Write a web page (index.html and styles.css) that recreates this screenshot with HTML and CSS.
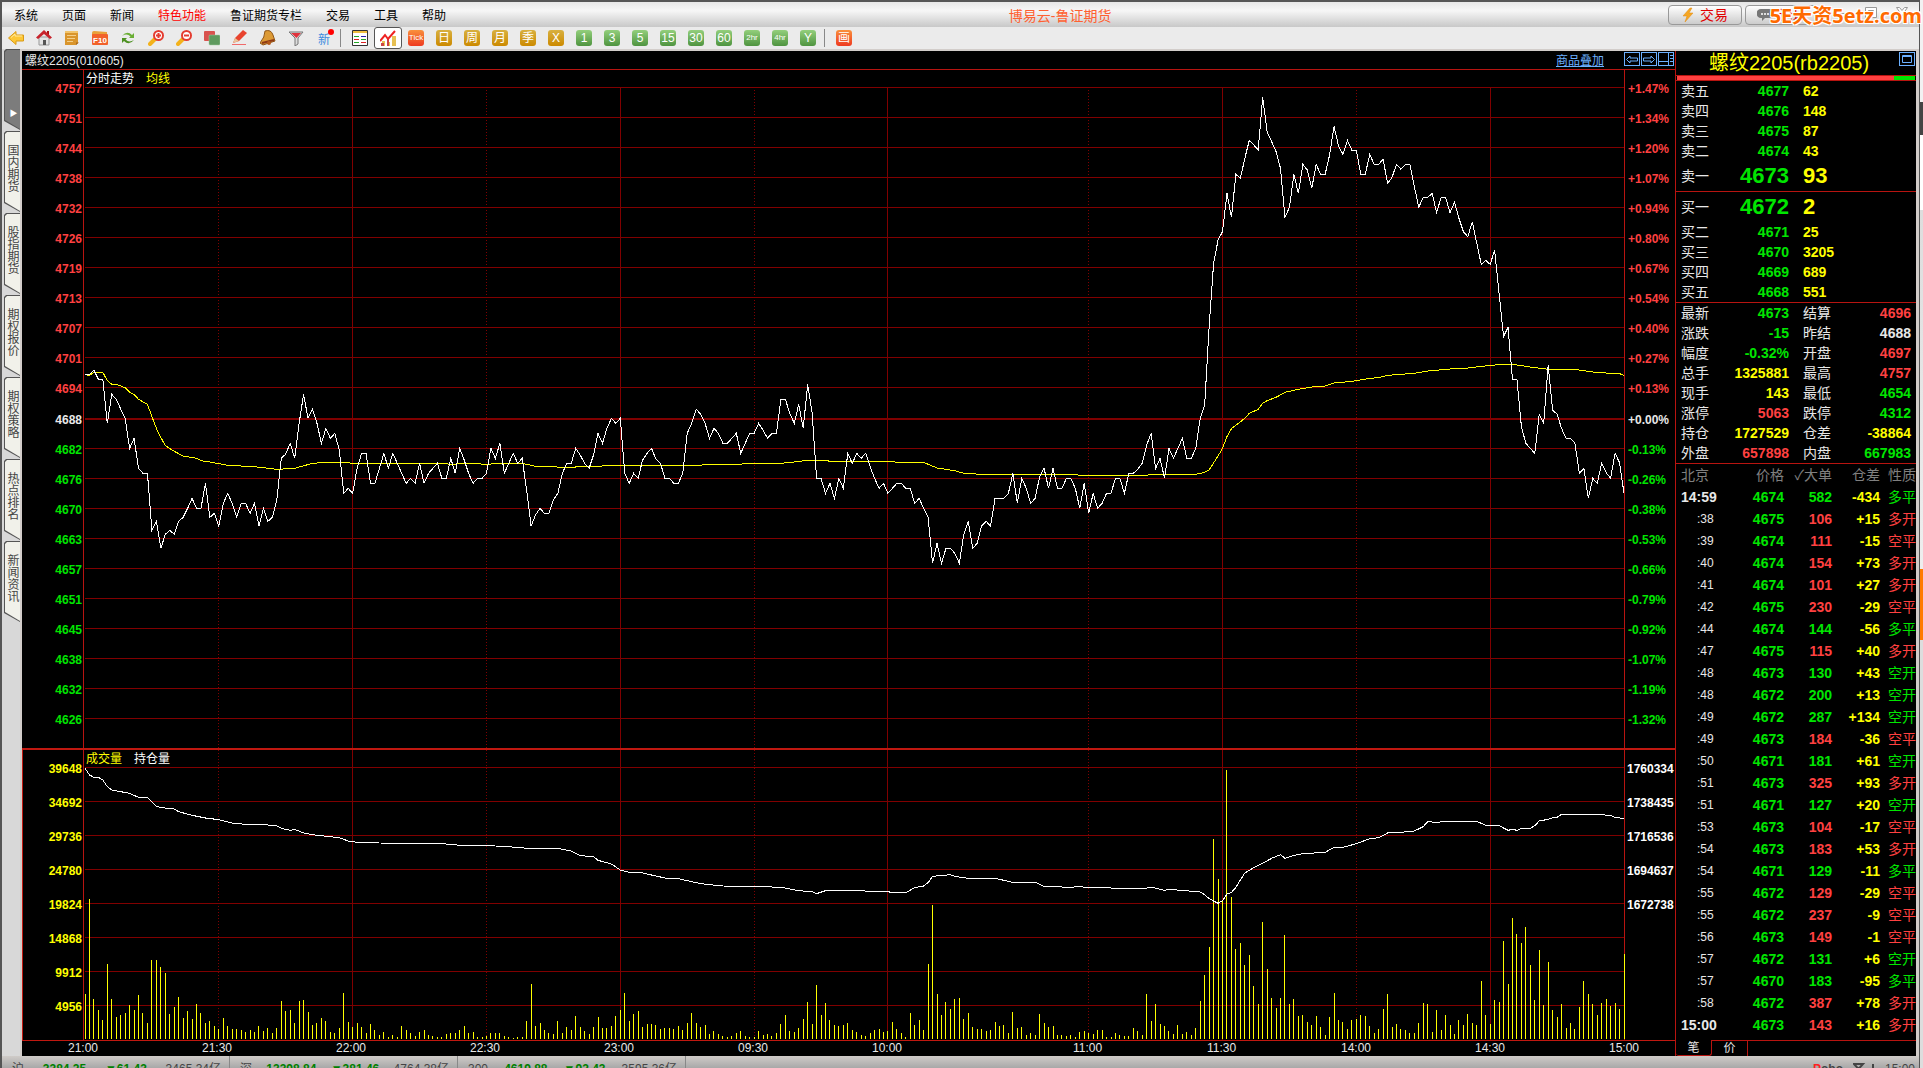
FILE: index.html
```html
<!DOCTYPE html>
<html lang="zh-CN">
<head>
    <meta charset="UTF-8">
    <meta name="viewport" content="width=device-width, initial-scale=1.0">
    <title>博易云-鲁证期货</title>
    <link rel="stylesheet" href="styles.css">
</head>
<body>
<div class="window">
    <header class="titlebar">
        <nav class="menu">
            <a href="#">系统</a>
            <a href="#">页面</a>
            <a href="#">新闻</a>
            <a href="#" class="hot">特色功能</a>
            <a href="#">鲁证期货专栏</a>
            <a href="#">交易</a>
            <a href="#">工具</a>
            <a href="#">帮助</a>
        </nav>
        <h1 class="title">博易云-鲁证期货</h1>
        <div class="actions">
            <button class="action">
                <svg width="12" height="16" viewBox="0 0 12 16"><path d="M8 1 1 9h4L3 15l8-9H7l3-5z" fill="#f5a623" stroke="#e08a10" stroke-width=".5"/></svg>
                交易
            </button>
            <button class="action">
                <svg width="16" height="14" viewBox="0 0 16 14"><path d="M4 1h8a4 4 0 0 1 0 9H8l-3 3v-3H4a4 4 0 0 1 0-9z" fill="#777"/><path d="M4 5h2v2H4zM7 5h2v2H7zM10 5h2v2h-2z" fill="#ddd"/></svg>
                论坛
            </button>
        </div>
        <div class="controls">
            <button class="control" aria-label="最小化"><svg width="14" height="14" viewBox="0 0 14 14"><path d="M2.500 7.500h9v3h-9z" fill="#fff" stroke="#999"/></svg></button>
            <button class="control" aria-label="还原"><svg width="14" height="14" viewBox="0 0 14 14"><path d="M1.500 1.500h11v10h-11z" fill="#fff" stroke="#999"/><path d="M4.500 4.500h5v4h-5z" fill="#ddd" stroke="#999"/></svg></button>
            <button class="control" aria-label="关闭"><svg width="14" height="14" viewBox="0 0 14 14"><path d="M1.500 1.500h3L7 4.500l2.500-3h3L9 6.500l3.500 5h-3L7 8.500l-2.500 3h-3L5 6.500z" fill="#fff" stroke="#999"/></svg></button>
        </div>
        <span class="watermark">5E天资5etz.com</span>
    </header>

    <div class="toolbar">
        <button class="tool" aria-label="后退"><svg viewBox="0 0 16 16"><path d="M.5 8 8 1.500V5h7.500v6H8v3.500z" fill="#fcc737" stroke="#d99a15"/><path d="M3 7.500 7 4v2h7" fill="none" stroke="#ffe9a0"/></svg></button>
        <button class="tool" aria-label="首页"><svg viewBox="0 0 16 16"><path d="M3 7h10v8H3z" fill="#e4e4e4" stroke="#999"/><path d="M7 10h3v5H7z" fill="#555"/><path d="M11 1h2v4h-2z" fill="#a11"/><path d="M8 0 0 7.500 2 9l6-5 6 5 2-1.500z" fill="#c8232c"/></svg></button>
        <button class="tool" aria-label="公告"><svg viewBox="0 0 16 16"><path d="M1 1h13v12l-2 2H1z" fill="#d9952c"/><path d="M1 1h13v2H1z" fill="#f1c46c"/><path d="M3 5.500h9M3 8.500h8M3 11.500h6" stroke="#f3cf8a"/><path d="M12 15v-2.500h3z" fill="#a8681b"/></svg></button>
        <button class="tool" aria-label="F10"><svg viewBox="0 0 16 16"><path d="M0 3q0-2 2-2l13 1v4H0z" fill="#e9a13a"/><rect y="4" width="16" height="11" rx="1" fill="#f2622a"/><text x="8" y="13" class="f10">F10</text></svg></button>
        <button class="tool" aria-label="刷新"><svg viewBox="0 0 16 16"><path d="M2 6q5-6 10-1l2-2v5H9l1.500-1.500Q7 3 2 6z" fill="#6aae35"/><path d="M14 10q-5 6-10 1l-2 2V8h5L5.500 9.500Q9 13 14 10z" fill="#4d9122"/></svg></button>
        <button class="tool" aria-label="放大"><svg viewBox="0 0 16 16"><path d="m2 14 5-5" stroke="#f3b21b" stroke-width="4" stroke-linecap="round"/><circle cx="10.500" cy="5.500" r="4.500" fill="#fff" stroke="#e43c30" stroke-width="2"/><path d="M8 5.500h5M10.500 3v5" stroke="#e43c30" stroke-width="2"/></svg></button>
        <button class="tool" aria-label="缩小"><svg viewBox="0 0 16 16"><path d="m2 14 5-5" stroke="#f3b21b" stroke-width="4" stroke-linecap="round"/><circle cx="10.500" cy="5.500" r="4.500" fill="#fff" stroke="#e43c30" stroke-width="2"/><path d="M8 5.500h5" stroke="#e43c30" stroke-width="2"/></svg></button>
        <button class="tool" aria-label="叠加"><svg viewBox="0 0 16 16"><rect width="11" height="10" y="1" rx="1" fill="#d9534f"/><rect x="5" y="5" width="11" height="10" rx="1" fill="#5f9a5f" stroke="#a3c9a3" stroke-width=".5"/></svg></button>
        <button class="tool" aria-label="画笔"><svg viewBox="0 0 16 16"><path d="m1 13 2-5 8-8 4 3-8 8z" fill="#e8432e"/><path d="m3 8 4 3-6 2z" fill="#e8c49a"/><path d="M0 14.500h14" stroke="#f06a6a"/></svg></button>
        <button class="tool" aria-label="预警"><svg viewBox="0 0 16 16"><path d="M5 1q6-2 8 4l2 6-12 4-3-2q5-6 5-12z" fill="#dc9a35" stroke="#8f5516"/><path d="m2 13 12-3" stroke="#8f3a16" stroke-width="2"/><circle cx="9" cy="13" r="2" fill="#b55a1b"/></svg></button>
        <button class="tool" aria-label="筛选"><svg viewBox="0 0 16 16"><path d="M1 2h14l-5 6v6l-3 2V8z" fill="#ddd" stroke="#777"/><path d="M3 3h10L8.500 8z" fill="#e0323c"/></svg></button>
        <button class="tool new">新</button>
        <span class="sep"></span>
        <button class="tool" aria-label="报价"><svg viewBox="0 0 16 16"><path d="M.5.5h15v15H.5z" fill="#fff" stroke="#333"/><path d="M1 1h14v2H1z" fill="#f0c040"/><path d="M2 6.500h5M2 12.500h5M9 9.500h5" stroke="#2a2"/><path d="M2 9.500h5M9 12.500h5" stroke="#d22"/><path d="M9 6.500h5" stroke="#22a"/></svg></button>
        <button class="tool active" aria-label="分时"><svg viewBox="0 0 16 16"><path d="M2 11h3v5H2zM7 12h3v4H7zM12 6h4v10h-4z" fill="#e7c052"/><path d="M1 13h3v3H1zM7 9h2v7H7z" fill="#c44"/><path d="m0 11 5-6 3 4 7-8" fill="none" stroke="#e22" stroke-width="2"/></svg></button>
        <button class="tool"><span class="period red narrow">Tick</span></button>
        <button class="tool"><span class="period gold">日</span></button>
        <button class="tool"><span class="period gold">周</span></button>
        <button class="tool"><span class="period gold">月</span></button>
        <button class="tool"><span class="period gold">季</span></button>
        <button class="tool"><span class="period gold">X</span></button>
        <button class="tool"><span class="period green">1</span></button>
        <button class="tool"><span class="period green">3</span></button>
        <button class="tool"><span class="period green">5</span></button>
        <button class="tool"><span class="period green">15</span></button>
        <button class="tool"><span class="period green">30</span></button>
        <button class="tool"><span class="period green">60</span></button>
        <button class="tool"><span class="period green narrow">2hr</span></button>
        <button class="tool"><span class="period green narrow">4hr</span></button>
        <button class="tool"><span class="period green">Y</span></button>
        <span class="sep"></span>
        <button class="tool"><span class="period red">画</span></button>
    </div>

    <main class="main">
        <aside class="side">
            <button class="tab open" aria-label="展开">▶</button>
            <button class="tab">国内期货</button>
            <button class="tab">股指期货</button>
            <button class="tab">期权报价</button>
            <button class="tab">期权策略</button>
            <button class="tab">热点排名</button>
            <button class="tab">新闻资讯</button>
        </aside>

        <section class="charts">
            <div class="chart-head">
                <span>螺纹2205(010605)</span>
                <a href="#" class="overlay">商品叠加</a>
                <div class="boxes">
                    <button class="box" aria-label="左"><svg width="12" height="9" viewBox="0 0 12 9"><path d="M.5 4.500 4 1v2h7.500v3H4v2z"/></svg></button>
                    <button class="box" aria-label="右"><svg width="12" height="9" viewBox="0 0 12 9"><path d="M11.500 4.500 8 1v2H.5v3H8v2z"/></svg></button>
                    <button class="box" aria-label="布局"><svg width="14" height="12" viewBox="0 0 14 12"><path d="M0 8.500h9M9.500 0v12M11 2.500h3M11 5.500h3M11 8.500h3"/></svg></button>
                </div>
            </div>
            <div class="chart">
                <ul class="axis left" id="price-axis"></ul>
                <div class="plot">
                    <svg id="price" viewBox="0 0 345 2034" preserveAspectRatio="none"></svg>
                    <p class="legend"><span>分时走势</span><span class="yellow">均线</span></p>
                </div>
                <ul class="axis right" id="percent-axis"></ul>
            </div>
            <div class="chart volume">
                <ul class="axis left" id="volume-axis"></ul>
                <div class="plot">
                    <svg id="volume" viewBox="0 0 345 870" preserveAspectRatio="none"></svg>
                    <p class="legend"><span class="yellow">成交量</span><span>持仓量</span></p>
                </div>
                <ul class="axis right" id="interest-axis"></ul>
            </div>
            <div class="times">
                <span>21:00</span><span>21:30</span><span>22:00</span><span>22:30</span><span>23:00</span><span>09:30</span><span>10:00</span><span>11:00</span><span>11:30</span><span>14:00</span><span>14:30</span><span>15:00</span>
            </div>
        </section>

        <section class="quote">
            <div class="quote-head">
                <h2>螺纹2205(rb2205)</h2>
                <button class="box" aria-label="最大化"><svg width="10" height="8" viewBox="0 0 10 8"><path d="M.5.5h9v7h-9zM0 1.500h10"/></svg></button>
            </div>
            <div class="ratio"><i></i></div>
            <table class="book">
                <tr><th>卖五</th><td>4677</td><td>62</td></tr>
                <tr><th>卖四</th><td>4676</td><td>148</td></tr>
                <tr><th>卖三</th><td>4675</td><td>87</td></tr>
                <tr><th>卖二</th><td>4674</td><td>43</td></tr>
                <tr class="best"><th>卖一</th><td>4673</td><td>93</td></tr>
            </table>
            <table class="book">
                <tr class="best"><th>买一</th><td>4672</td><td>2</td></tr>
                <tr><th>买二</th><td>4671</td><td>25</td></tr>
                <tr><th>买三</th><td>4670</td><td>3205</td></tr>
                <tr><th>买四</th><td>4669</td><td>689</td></tr>
                <tr><th>买五</th><td>4668</td><td>551</td></tr>
            </table>
            <table class="stats">
                <tr><th>最新</th><td class="down">4673</td><th>结算</th><td class="up">4696</td></tr>
                <tr><th>涨跌</th><td class="down">-15</td><th>昨结</th><td>4688</td></tr>
                <tr><th>幅度</th><td class="down">-0.32%</td><th>开盘</th><td class="up">4697</td></tr>
                <tr><th>总手</th><td class="yellow">1325881</td><th>最高</th><td class="up">4757</td></tr>
                <tr><th>现手</th><td class="yellow">143</td><th>最低</th><td class="down">4654</td></tr>
                <tr><th>涨停</th><td class="up">5063</td><th>跌停</th><td class="down">4312</td></tr>
                <tr><th>持仓</th><td class="yellow">1727529</td><th>仓差</th><td class="yellow">-38864</td></tr>
                <tr><th>外盘</th><td class="up">657898</td><th>内盘</th><td class="down">667983</td></tr>
            </table>
            <table class="ticks">
                <thead><tr><th>北京</th><th>价格</th><th>✓大单</th><th>仓差</th><th>性质</th></tr></thead>
                <tbody id="ticks"></tbody>
            </table>
            <div class="pages">
                <button class="page on">笔</button>
                <button class="page">价</button>
            </div>
        </section>
    </main>

    <footer class="status">
        <div class="index"><span>沪</span><b>3384.25</b><b>▼61.43</b><span>3465.34亿</span></div>
        <div class="index"><span>深</span><b>13398.84</b><b>▼381.46</b><span>4764.38亿</span></div>
        <div class="index"><span>300</span><b>4619.88</b><b>▼92.43</b><span>3595.36亿</span></div>
        <div class="state">
            <strong><em>P</em>obo</strong>
            <svg width="22" height="12" viewBox="0 0 22 12"><path d="M1 1h9L5.500 6zM5.500 5v7M14 12V8M17 12V5M20 12V1" fill="none" stroke="#444" stroke-width="2"/></svg>
            <span>15:00</span>
        </div>
    </footer>
</div>
<script src="script.js"></script>
</body>
</html>
```

FILE: styles.css
```css
* {
    margin: 0;
    padding: 0;
    box-sizing: border-box;
}
body {
    height: 100vh;
    overflow: hidden;
    padding-right: 3px;
    font-family: "Liberation Sans", "Noto Sans CJK SC", sans-serif;
    font-size: 12px;
    background: linear-gradient(#f2f2f2 102px, #444 102px, #444 135px, #fff 135px, #fff 210px, #ddd 210px, #eee 569px, #ff7a00 569px, #ff7a00 640px, #ddd 640px);
}
button {
    border: none;
    background: none;
    font: inherit;
    color: inherit;
}
a {
    color: inherit;
    text-decoration: none;
}
ul {
    list-style: none;
}
table {
    width: 100%;
    border-collapse: collapse;
    table-layout: fixed;
}
.window {
    height: 100%;
    display: flex;
    flex-direction: column;
    border: solid #555;
    border-width: 2px 1px 0 2px;
    background: #dcdcdc;
}
.up {
    color: #ff4040;
}
.down {
    color: #00e600;
}
.yellow {
    color: #ffff00;
}

/* title bar */
.titlebar {
    position: relative;
    flex: none;
    display: flex;
    align-items: center;
    height: 25px;
    padding-left: 12px;
    background: linear-gradient(#e6e6e6, #f6f6f6 35%, #c8c8c8);
}
.menu {
    display: flex;
    gap: 24px;
    color: #000;
}
.menu .hot {
    color: #ff0000;
}
.title {
    flex: 1;
    padding-left: 6px;
    text-align: center;
    font-size: 14px;
    font-weight: normal;
    color: #ff6030;
}
.actions {
    display: flex;
    gap: 3px;
}
.action {
    display: flex;
    align-items: center;
    justify-content: center;
    gap: 6px;
    width: 74px;
    height: 20px;
    border: 1px solid #999;
    border-radius: 4px;
    background: linear-gradient(#fff, #ccc);
    font-size: 14px;
    line-height: 16px;
    color: #e00000;
}
.controls {
    display: flex;
    gap: 17px;
    padding: 0 10px 4px 14px;
}
.control {
    width: 14px;
    height: 14px;
}
.control svg {
    display: block;
}
.watermark {
    position: absolute;
    top: 0;
    right: -3px;
    font-family: "Open Sans", "Noto Sans CJK SC", sans-serif;
    font-size: 20px;
    font-weight: bold;
    line-height: 28px;
    color: #ff6a00;
    text-shadow: 1px 1px #fff, -1px -1px #fff, 1px -1px #fff, -1px 1px #fff;
    white-space: nowrap;
}

/* toolbar */
.toolbar {
    flex: none;
    display: flex;
    align-items: center;
    height: 24px;
    background: #ebebeb;
    border-bottom: 2px solid #d2cdca;
}
.tool {
    display: flex;
    align-items: center;
    justify-content: center;
    width: 28px;
    height: 22px;
}
.tool svg {
    width: 16px;
    height: 16px;
}
.tool.active {
    border: 1px solid #555;
    border-radius: 3px;
    background: #fff;
}
.tool.new {
    position: relative;
    color: #3c8ce0;
}
.tool.new::after {
    content: "";
    position: absolute;
    top: 2px;
    right: 4px;
    width: 6px;
    height: 6px;
    border-radius: 50%;
    background: #ff0000;
}
.sep {
    width: 8px;
    height: 18px;
    border-left: 1px solid #888;
    margin-left: 2px;
    margin-right: -2px;
}
.f10 {
    font-size: 8px;
    font-weight: bold;
    fill: #fff;
    text-anchor: middle;
}
.period {
    width: 16px;
    height: 16px;
    border-radius: 3px;
    font-size: 12px;
    line-height: 16px;
    text-align: center;
    color: #fff;
}
.gold {
    background: linear-gradient(#d8b040, #cc8a00);
}
.green {
    background: linear-gradient(#93cf7c, #4f9440);
}
.red {
    background: linear-gradient(#f9903c, #ee3a20);
}
.narrow {
    font-size: 8px;
}

/* side tabs */
.main {
    flex: none;
    display: flex;
}
.side {
    flex: none;
    display: flex;
    flex-direction: column;
    gap: 1px;
    width: 20px;
    margin-top: -2px;
    padding-left: 2px;
    background: linear-gradient(90deg, #d8d8d8 18px, #d2cdca 18px);
}
.tab {
    position: relative;
    z-index: 0;
    width: 16px;
    height: 81px;
    padding-bottom: 8px;
    background: #555;
    clip-path: polygon(0 2px, 2px 0, 100% 0, 100% 100%, 0 72px);
    writing-mode: vertical-rl;
    line-height: 16px;
    color: #444;
}
.tab::before {
    content: "";
    position: absolute;
    z-index: -1;
    inset: 1px 0 1px 1px;
    background: #f1f1ea;
    clip-path: polygon(0 2px, 2px 0, 100% 0, 100% 100%, 0 70px);
}
.tab.open {
    padding: 46px 0 0;
    font-size: 8px;
    color: #fff;
}
.tab.open::before {
    background: #7c7c7c;
}

/* charts */
.charts {
    flex: 1;
    display: flex;
    flex-direction: column;
    background: #000;
    color: #e8e8e8;
}
.chart-head {
    display: flex;
    align-items: center;
    height: 19px;
    padding: 0 1px 2px 3px;
    border-bottom: 1px solid #b81410;
}
.overlay {
    margin-left: auto;
    margin-right: 20px;
    color: #6cb0ff;
    text-decoration: underline;
}
.boxes {
    display: flex;
    gap: 1px;
}
.box {
    display: flex;
    align-items: center;
    justify-content: center;
    width: 16px;
    height: 14px;
    border: 1px solid #6cb0ff;
}
.box svg {
    flex: none;
    fill: none;
    stroke: #6cb0ff;
}
.chart {
    display: grid;
    grid-template-columns: 61px 1fr 50px;
    grid-template-rows: 100%;
    height: 678px;
}
.chart.volume {
    height: 293px;
    border: solid #c01810;
    border-width: 2px 0 1px 1px;
    grid-template-columns: 60px 1fr 50px;
}
.plot {
    position: relative;
    min-width: 0;
    padding-left: 1px;
    border: solid #b81410;
    border-width: 0 1px;
}
.plot svg {
    display: block;
    width: 100%;
    height: 100%;
    overflow: visible;
    shape-rendering: crispEdges;
}
.plot svg * {
    fill: none;
    vector-effect: non-scaling-stroke;
}
.grid {
    stroke: #800000;
}
.grid.base {
    stroke-width: 2;
}
.grid.half {
    stroke-dasharray: 1 2;
}
.line {
    stroke: #fff;
}
.avg,
.bars {
    stroke: #ffff00;
}
.legend {
    position: absolute;
    top: 0;
    left: 2px;
    display: flex;
    gap: 12px;
    line-height: 18px;
    color: #fff;
}
.axis {
    padding-top: 4px;
    font-weight: bold;
    white-space: nowrap;
}
.axis li {
    height: 30px;
    line-height: 30px;
}
.axis .zero {
    height: 31px;
    line-height: 32px;
    color: #e8e8e8;
}
.axis.left {
    padding-right: 1px;
    text-align: right;
}
.axis.right {
    padding-left: 3px;
}
.volume .axis {
    padding-top: 2px;
}
.volume .axis li {
    height: 34px;
    line-height: 34px;
}
.volume .axis.right {
    padding-left: 2px;
    color: #fff;
}
.times {
    display: grid;
    grid-template-columns: repeat(6, 30fr) 45fr repeat(4, 30fr) 50px;
    padding-left: 62px;
    height: 15px;
    line-height: 15px;
}
.times span {
    margin-left: -16px;
}

/* quote panel */
.quote {
    flex: none;
    width: 244px;
    border: solid #b81410;
    border-width: 0 3px 0 1px;
    border-right-color: #d2cdca;
    background: #000;
    font-size: 14px;
    color: #e8e8e8;
}
.quote th {
    font-weight: normal;
    text-align: left;
    padding-left: 5px;
}
.quote td {
    font-weight: bold;
    text-align: right;
}
.quote-head {
    position: relative;
    height: 25px;
    border-bottom: 1px solid #b81410;
}
.quote-head h2 {
    padding-right: 14px;
    text-align: center;
    font-size: 20px;
    font-weight: normal;
    line-height: 24px;
    color: #ffff00;
}
.quote-head .box {
    position: absolute;
    top: 1px;
    right: 1px;
}
.ratio {
    height: 5px;
    padding: 0 1px;
    border-bottom: 1px solid #b81410;
}
.ratio i {
    display: block;
    height: 4px;
    background: linear-gradient(90deg, #ff4040 91%, #00e600 91%);
}
.book {
    border-bottom: 1px solid #b81410;
}
.book tr,
.stats tr {
    height: 20px;
    line-height: 20px;
}
.book tr.best {
    height: 30px;
    line-height: 30px;
}
.book .best td {
    font-size: 22px;
}
.book th {
    width: 50px;
}
.book td {
    width: 63px;
    color: #00e600;
}
.book td:last-child {
    width: auto;
    padding-left: 14px;
    text-align: left;
    color: #ffff00;
}
.stats {
    border-bottom: 1px solid #b81410;
}
.stats th {
    width: 46px;
}
.stats th:nth-child(3) {
    width: 60px;
    padding-left: 14px;
}
.stats td:nth-child(2) {
    width: 67px;
}
.stats td:last-child {
    padding-right: 5px;
}
.ticks tr {
    height: 22px;
    line-height: 22px;
}
.ticks thead {
    color: #808080;
}
.ticks th {
    padding: 0;
    text-align: right;
    white-space: nowrap;
}
.ticks th:first-child {
    width: 60px;
    padding-left: 5px;
    text-align: left;
}
.ticks th:nth-child(n+2) {
    width: 48px;
}
.ticks th:last-child {
    width: 36px;
}
.ticks td:first-child {
    padding-left: 5px;
    text-align: left;
}
.ticks td.second {
    padding-left: 21px;
    font-size: 12px;
    font-weight: normal;
}
.ticks td:last-child {
    font-weight: normal;
}
.pages {
    display: flex;
    height: 20px;
    padding-top: 4px;
    background: linear-gradient(transparent 4px, #b81410 4px, #b81410 5px, transparent 5px);
}
.page {
    width: 36px;
    height: 16px;
    border-right: 1px solid #b81410;
    font-size: 12px;
    line-height: 14px;
}
.page.on {
    background: #000;
    border-bottom: 1px solid #b81410;
    border-radius: 0 0 3px 3px;
}

/* status bar */
.status {
    flex: none;
    display: flex;
    gap: 10px;
    height: 26px;
    padding-left: 10px;
    line-height: 26px;
    background: linear-gradient(#cfcbc8, #a8a8a8 12px);
    color: #444;
}
.index {
    display: flex;
    justify-content: space-between;
    width: 218px;
    padding-right: 8px;
    border-right: 1px solid #888;
}
.index b {
    color: #008000;
}
.state {
    display: flex;
    align-items: center;
    gap: 10px;
    margin-left: auto;
    padding-right: 4px;
}
.state em {
    font-style: normal;
    color: #ff2020;
}
```

FILE: script.js
```js
// x is the trading minute (0..345), y counts down from the top of each plot
const MINUTES = 345;

// session minutes with a vertical line: solid on the hour, dotted on the half
const SOLID = [60, 120, 180, 255, 315];
const DOTTED = [30, 90, 150, 225, 285];

const early = [
    104,104,91,118,118,250,163,178,207,235,325,295,385,400,400,571,544,625,583,571,
    583,544,532,505,475,505,505,430,532,520,558,490,460,490,532,490,490,520,490,558,
    505,544,532,480,355,342,310,355,250,163,235,208,250,310,265,295,280,330,460,445,
    460,385,340,340,430,430,385,340,385,340,370,400,430,415,430,370,430,400,385,370,
    415,415,355,400,325,360,400,430,415,415,400,325,355,310,400,370,340,370,355,450,
    558,525,505,520,520,480,460,400,370,370,325,345,370,385,345,280,310,265,235,250,
    235,400,430,400,415,360,340,325,358,370,415,415,430,430,400,280,250,208,222,250,
    295,265,280,310,310,295,280,340,310,280,280,250,270,295,280,280,178,178,220,250,
    193,265,133,218,415,415,460,430,475,415,445,340,370,340,355,340,380,415,445,430,
    460,445,430,430,445,445,490,475,505,532,670,610,670,625,625,640,670,583,544,625,
    610,558,544,558,475,475,475,460,400,490,415,445,490,475,410,385,445,385,445,445,
    415,415,445,505,430,520,460,505,490,460,460,415,415,460,400,400,388,370,315,280,
    385,355,415,325,355,325,295,355,355,325,235
].map(y => y + 810);

const late = [
    975,740,550,480,455,340,412,283,295,235,181,195,210,52,155,185,215,265,412,
    382,283,340,253,270,325,253,283,283,225,139,198,223,181,211,211,283,283,223,253,
    253,238,310,292,253,268,253,253,320,382,352,352,340,398,352,352,398,367,415,455,
    470,425,490,553,541,553,511,640,770,742,898,898,1040,1090,1105,1120,1003,1030,856,990,
    1003,1045,1075,1075,1090,1180,1165,1255,1195,1210,1150,1178,1195,1120,1148,1240
].map(y => y + 30);

const average = [
    [0,104],[1,106],[2,97],[4,97],[5,122],[6,133],[7,133],[9,143],[10,157],[11,163],[12,178],[14,193],
    [15,230],[16,265],[17,292],[18,317],[20,334],[22,348],[25,355],[26,362],[28,366],[32,376],[38,380],
    [43,388],[47,385],[51,370],[54,367],[58,367],[60,370],[80,370],[82,373],[86,370],[90,373],[93,370],
    [98,370],[101,379],[108,382],[118,377],[136,376],[143,373],[156,370],[159,366],[162,361],[166,361],
    [167,364],[181,364],[182,367],[188,367],[191,384],[195,392],[197,400],[201,403],[222,403],[223,406],
    [238,406],[239,403],[249,403],[251,397],[252,390],[254,348],[255,325],[256,290],[257,266],[260,235],
    [261,220],[263,208],[264,190],[265,182],[267,172],[269,157],[272,148],[275,141],[278,138],[280,129],
    [284,124],[288,115],[290,113],[292,106],[298,100],[301,93],[306,87],[310,84],[315,76],[318,73],
    [320,73],[324,81],[328,88],[334,88],[338,96],[342,100],[344,101],[345,106]
].map(([x, y]) => [x, y + 810]);

const interest = [
    [0,85],[1,105],[2,112],[3,112],[4,120],[5,140],[6,150],[10,160],[12,172],[14,172],[15,185],[16,200],
    [18,204],[20,207],[21,215],[24,226],[27,234],[30,239],[33,249],[36,253],[41,255],[43,258],[44,265],
    [46,271],[47,268],[49,279],[52,286],[55,290],[57,293],[59,303],[61,307],[66,309],[80,311],[86,318],
    [87,316],[92,318],[98,323],[100,327],[102,325],[106,325],[109,333],[111,347],[114,350],[115,361],
    [118,372],[120,390],[122,397],[125,399],[128,408],[130,414],[133,416],[136,425],[138,431],[143,438],
    [153,440],[157,444],[160,452],[163,455],[164,461],[166,452],[172,452],[180,455],[181,458],[184,458],
    [186,443],[188,438],[189,428],[190,409],[194,404],[195,409],[198,415],[204,415],[206,421],[208,427],
    [213,427],[215,439],[221,442],[223,439],[224,442],[230,444],[238,444],[239,441],[242,451],[243,448],
    [250,456],[251,464],[252,476],[254,490],[255,482],[256,462],[257,457],[258,442],[259,420],[260,399],
    [262,383],[264,370],[266,355],[268,344],[269,355],[271,346],[273,341],[278,337],[280,322],[282,322],
    [285,311],[288,296],[290,293],[292,279],[295,277],[298,273],[300,260],[301,245],[303,247],[305,244],
    [312,244],[314,256],[317,257],[319,271],[320,268],[321,271],[322,265],[324,265],[325,257],[326,243],
    [328,238],[329,233],[330,232],[331,223],[338,223],[342,226],[343,232],[345,236]
].map(([x, y]) => [x, y - 30]);

const volume = [
    762,477,777,810,840,672,777,830,825,819,795,810,765,819,849,660,660,681,699,822,
    801,771,834,813,837,792,819,849,843,858,867,834,858,867,867,870,876,870,876,858,
    873,864,879,864,783,813,810,849,783,780,816,855,849,834,843,876,879,864,759,846,
    861,849,861,879,852,870,885,876,891,885,891,858,870,879,888,876,870,885,888,891,
    891,882,879,879,870,858,879,876,891,891,888,879,879,879,888,891,894,891,891,843,
    732,858,849,870,879,882,843,879,861,870,828,861,873,882,861,831,864,864,858,828,
    810,759,843,822,813,861,852,852,855,867,864,864,867,858,870,849,819,849,861,855,
    882,873,882,888,891,888,879,873,888,891,891,873,885,882,888,879,852,825,873,876,
    864,837,786,852,735,825,789,840,855,858,855,849,870,876,885,888,879,870,867,876,
    873,846,867,879,891,819,855,840,870,672,495,762,825,786,807,777,774,837,819,861,
    867,867,873,870,846,858,855,879,816,864,861,885,879,885,822,849,861,858,885,885,
    888,885,891,876,873,879,882,870,870,891,891,879,885,888,888,864,873,885,762,843,
    792,852,858,873,882,855,882,876,885,864,783,705,621,297,417,480,90,471,627,609,
    675,645,738,792,546,687,774,804,774,585,792,777,828,825,846,855,828,861,885,831,
    759,840,846,867,840,837,825,828,858,879,867,807,762,861,852,867,870,879,879,849,
    789,792,876,810,870,825,855,882,840,855,822,849,855,723,825,852,780,786,603,732,
    534,582,609,561,675,780,630,795,666,810,831,792,864,849,867,801,723,762,792,825,
    789,777,798,789,807,642
].map(y => y - 30);

function path(cls, d) {
    return `<path class="${cls}" d="${d}"/>`;
}
function polyline(cls, points) {
    return path(cls, 'M' + points.map(p => p.join(' ')).join('L'));
}
function verticals(top, bottom) {
    const draw = x => `M${x} ${top}V${bottom}`;
    return path('grid', SOLID.map(draw).join('')) + path('grid half', DOTTED.map(draw).join(''));
}
function horizontal(cls, y) {
    return path(cls, `M0 ${y}H${MINUTES}`);
}

let price = verticals(52, 2034);
for (let i = 0; i < 22; i++) {
    if (i == 11) price += horizontal('grid base', 1047);
    else price += horizontal('grid', (i < 11 ? 52 : 55) + i * 90);
}
price += polyline('avg', average);
price += polyline('line', early.concat(late).map((y, x) => [x, y]));
document.querySelector('#price').innerHTML = price;

let lower = verticals(0, 870);
for (let i = 0; i < 8; i++) lower += horizontal('grid', 52 + i * 102);
lower += path('bars', volume.map((y, x) => `M${x} 867V${y}`).join(''));
lower += polyline('line', interest);
document.querySelector('#volume').innerHTML = lower;

function axis(id, labels, color) {
    document.querySelector(id).innerHTML = labels
        .map((text, i) => `<li class="${color(i)}">${text}</li>`).join('');
}
const side = i => i < 11 ? 'up' : i == 11 ? 'zero' : 'down';
axis('#price-axis', [4757,4751,4744,4738,4732,4726,4719,4713,4707,4701,4694,4688,4682,4676,4670,4663,4657,4651,4645,4638,4632,4626], side);
axis('#percent-axis', ['+1.47','+1.34','+1.20','+1.07','+0.94','+0.80','+0.67','+0.54','+0.40','+0.27','+0.13','+0.00','-0.13','-0.26','-0.38','-0.53','-0.66','-0.79','-0.92','-1.07','-1.19','-1.32'].map(p => p + '%'), side);
axis('#volume-axis', [39648,34692,29736,24780,19824,14868,9912,4956], () => 'yellow');
axis('#interest-axis', [1760334,1738435,1716536,1694637,1672738], () => '');

const ticks = [
    ['14:59', 4674, 582, '-434', '多平'],
    [':38', 4675, 106, '+15', '多开'],
    [':39', 4674, 111, '-15', '空平'],
    [':40', 4674, 154, '+73', '多开'],
    [':41', 4674, 101, '+27', '多开'],
    [':42', 4675, 230, '-29', '空平'],
    [':44', 4674, 144, '-56', '多平'],
    [':47', 4675, 115, '+40', '多开'],
    [':48', 4673, 130, '+43', '空开'],
    [':48', 4672, 200, '+13', '空开'],
    [':49', 4672, 287, '+134', '空开'],
    [':49', 4673, 184, '-36', '空平'],
    [':50', 4671, 181, '+61', '空开'],
    [':51', 4673, 325, '+93', '多开'],
    [':51', 4671, 127, '+20', '空开'],
    [':53', 4673, 104, '-17', '空平'],
    [':54', 4673, 183, '+53', '多开'],
    [':54', 4671, 129, '-11', '多平'],
    [':55', 4672, 129, '-29', '空平'],
    [':55', 4672, 237, '-9', '空平'],
    [':56', 4673, 149, '-1', '空平'],
    [':57', 4672, 131, '+6', '空开'],
    [':57', 4670, 183, '-95', '多平'],
    [':58', 4672, 387, '+78', '多开'],
    ['15:00', 4673, 143, '+16', '多开']
];
document.querySelector('#ticks').innerHTML = ticks.map(([time, p, lots, diff, kind]) => {
    const dir = kind == '多开' || kind == '空平' ? 'up' : 'down';
    return `<tr><td class="${time[0] == ':' ? 'second' : ''}">${time}</td><td class="down">${p}</td>` +
        `<td class="${dir}">${lots}</td><td class="yellow">${diff}</td><td class="${dir}">${kind}</td></tr>`;
}).join('');
```
